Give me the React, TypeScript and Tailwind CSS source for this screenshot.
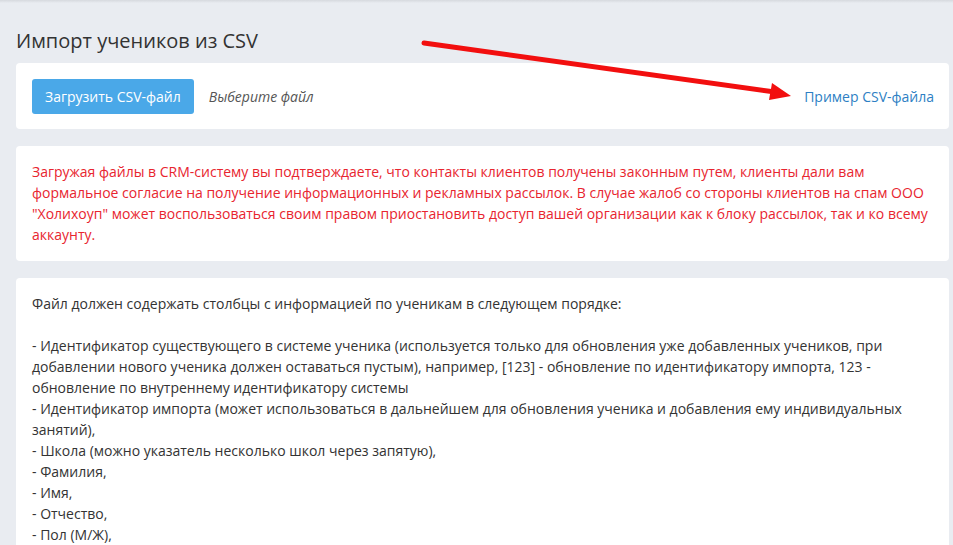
export default function App() {
  const lines = [
    "- Идентификатор существующего в системе ученика (используется только для обновления уже добавленных учеников, при добавлении нового ученика должен оставаться пустым), например, [123] - обновление по идентификатору импорта, 123 - обновление по внутреннему идентификатору системы",
    "- Идентификатор импорта (может использоваться в дальнейшем для обновления ученика и добавления ему индивидуальных занятий),",
    "- Школа (можно указатель несколько школ через запятую),",
    "- Фамилия,",
    "- Имя,",
    "- Отчество,",
    "- Пол (М/Ж),",
    "- Дата рождения,",
  ];
  return (
    <div className="relative h-[545px] w-[953px] overflow-hidden bg-[#e9ecf1] text-[14px] leading-[21px] text-[#333]" style={{ fontFamily: '"Open Sans", sans-serif' }}>
      <div className="h-[3px] bg-gradient-to-b from-[#d6d9de] to-[#e9ecf1]" />
      <div className="pl-4 pr-1">
        <h1 className="pt-[24px] pb-[9px] text-[20px] leading-[27px] text-[#333]">Импорт учеников из CSV</h1>
        <div className="flex h-[66px] items-center rounded bg-white pl-4 pr-[15px]">
          <button className="h-[35px] rounded-[3px] bg-[#4aa8e8] px-[13px] text-white">Загрузить CSV-файл</button>
          <span className="ml-[15px] italic text-[#555]">Выберите файл</span>
          <a className="ml-auto text-[#2e7fc4]">Пример CSV-файла</a>
        </div>
        <div className="mt-[17px] rounded bg-white px-4 pt-[15px] pb-[16px] text-[#e8252f]">
          Загружая файлы в CRM-систему вы подтверждаете, что контакты клиентов получены законным путем, клиенты дали вам формальное согласие на получение информационных и рекламных рассылок. В случае жалоб со стороны клиентов на спам ООО "Холихоуп" может воспользоваться своим правом приостановить доступ вашей организации как к блоку рассылок, так и ко всему аккаунту.
        </div>
        <div className="mt-[17px] rounded bg-white px-4 pt-[15px] pb-4">
          <p>Файл должен содержать столбцы с информацией по ученикам в следующем порядке:</p>
          <p className="h-[21px]" />
          {lines.map((l) => (
            <p key={l}>{l}</p>
          ))}
        </div>
      </div>
      <svg className="pointer-events-none absolute left-0 top-0" width="953" height="545">
        <line x1="424" y1="43" x2="775" y2="92" stroke="#f20f0f" strokeWidth="5" strokeLinecap="round" />
        <polygon points="791,96 772,83 769,100" fill="#f20f0f" />
      </svg>
    </div>
  );
}
